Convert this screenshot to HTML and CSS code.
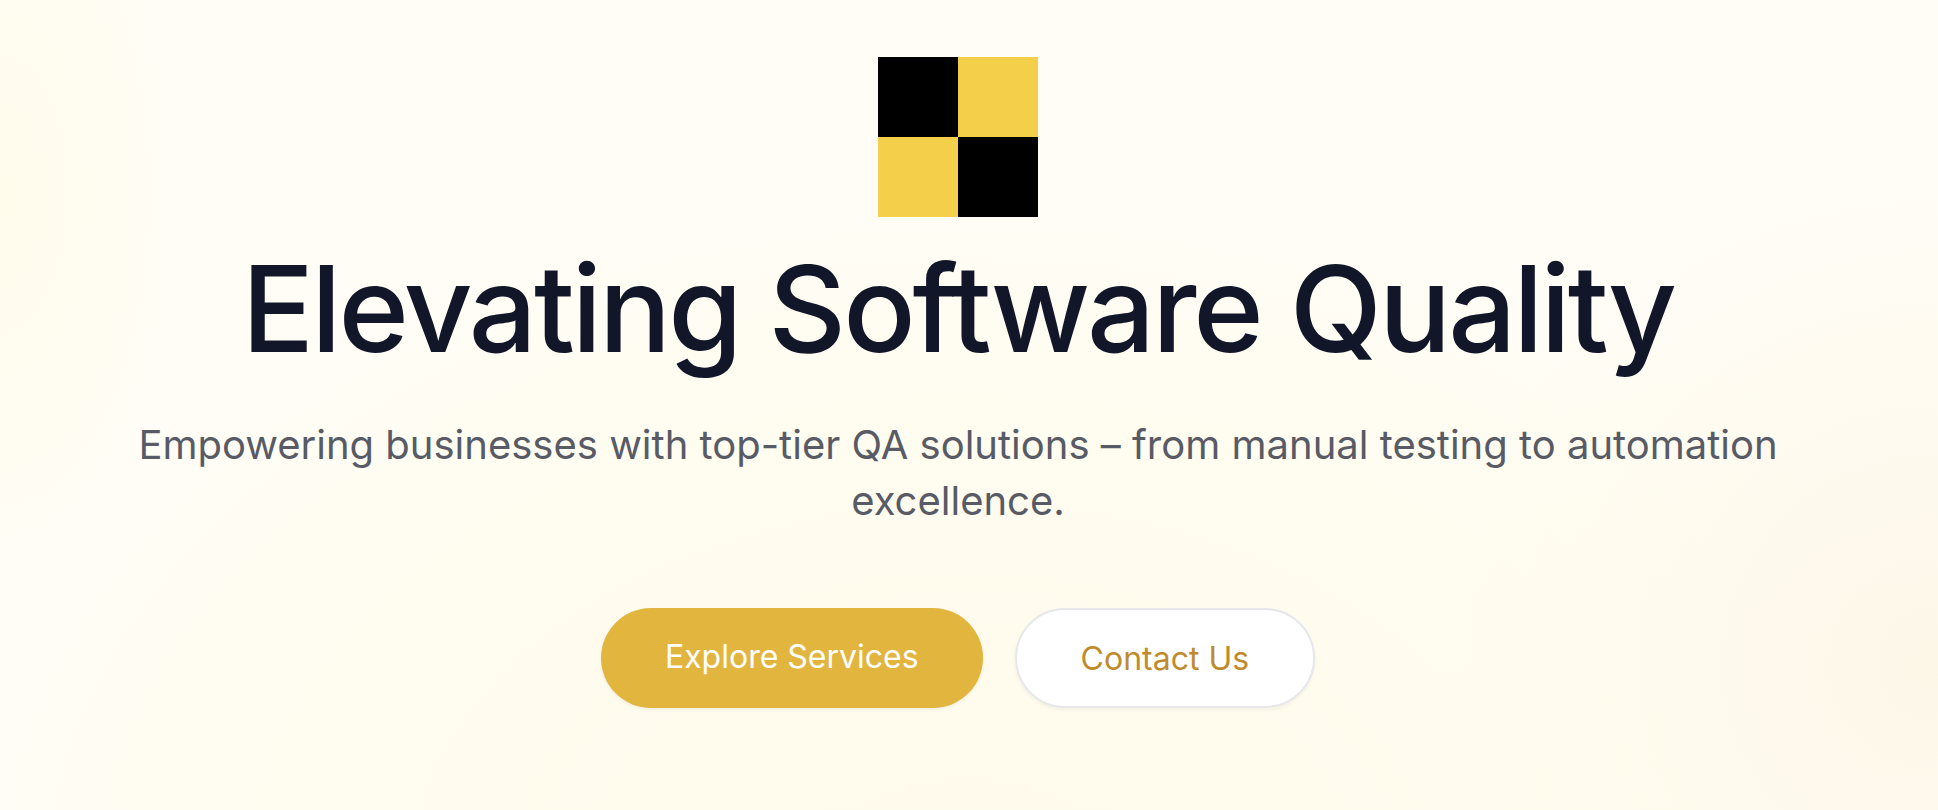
FILE: index.html
```html
<!DOCTYPE html>
<html lang="en">
<head>
<meta charset="utf-8">
<meta name="viewport" content="width=device-width, initial-scale=1">
<title>Elevating Software Quality</title>
<link rel="stylesheet" href="styles.css">
</head>
<body>
<main class="hero">
  <svg class="logo" viewBox="0 0 2 2" role="img" aria-label="Logo" shape-rendering="crispEdges">
    <path fill="#f3cf4a" d="M0 0h2v2H0z"/>
    <path fill="#000" d="M0 0h1v1H0zM1 1h1v1H1z"/>
  </svg>
  <h1 class="title">Elevating Software Quality</h1>
  <p class="lead">Empowering businesses with top-tier QA solutions – from manual testing to automation excellence.</p>
  <div class="actions">
    <a class="btn btn-primary" href="#services">Explore Services</a>
    <a class="btn btn-secondary" href="#contact">Contact Us</a>
  </div>
</main>
</body>
</html>
```
FILE: styles.css
```css
* { box-sizing: border-box; }

body {
  margin: 0;
  font-family: Inter, "Liberation Sans", sans-serif;
}

.hero {
  min-height: 100vh;
  padding: 57px 128px 96px 106px;
  display: flex;
  flex-direction: column;
  align-items: center;
  text-align: center;
  background:
    radial-gradient(ellipse 26% 60% at 100% 82%, #fdf7e8, #fdf7e800),
    radial-gradient(ellipse 10% 50% at 0% 24%, #fffcec, #fffcec00),
    radial-gradient(ellipse 55% 90% at 50% 110%, #fffaeb, #fffdf0 65%, #fffdf000),
    #fffdf6;
}

.logo {
  display: block;
  width: 160px;
  height: 160px;
}

.title {
  margin: 32px 0 0;
  color: #111729;
  font-size: 120px;
  line-height: 120px;
  font-weight: 500;
  letter-spacing: -3px;
}

.lead {
  max-width: 1680px;
  margin: 48px 0 0;
  color: #585b66;
  font-size: 40px;
  line-height: 56px;
}

.actions {
  display: flex;
  justify-content: center;
  gap: 32px;
  margin-top: 79px;
}

.btn {
  padding: 25px 64px 23px;
  border-radius: 50px;
  font-size: 32px;
  line-height: 48px;
  text-decoration: none;
  box-shadow: 0 2px 4px #0000000d;
}

.btn-primary {
  background: #e1b53e;
  color: #fff;
}

.btn-secondary {
  border: 2px solid #e5e7eb;
  background: #fff;
  color: #c08b2c;
}
```
